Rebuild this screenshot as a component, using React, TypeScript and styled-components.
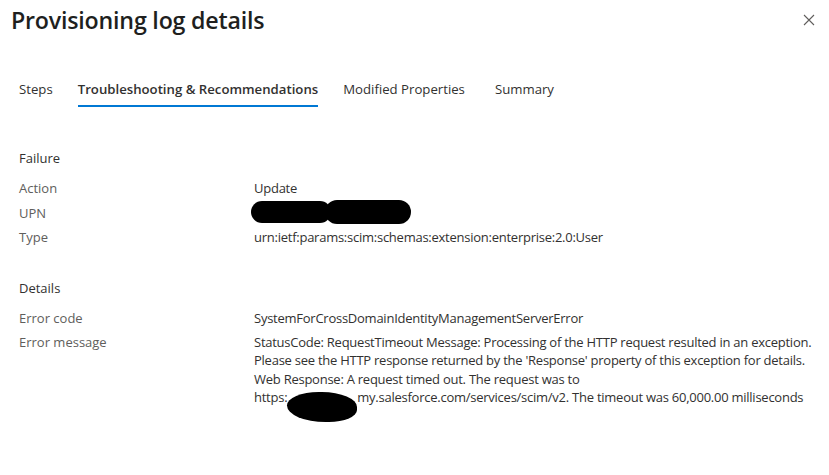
import styled, { createGlobalStyle } from 'styled-components';

const GlobalStyle = createGlobalStyle`
  html, body {
    margin: 0;
    padding: 0;
    background: #ffffff;
  }

  body {
    font-family: 'Open Sans', 'Noto Sans', sans-serif;
    color: #323130;
  }
`;

const tabs = ['Steps', 'Troubleshooting & Recommendations', 'Modified Properties', 'Summary'];

const failureRows = [
  { label: 'Action', value: 'Update' },
  { label: 'UPN', value: '', redacted: true },
  { label: 'Type', value: 'urn:ietf:params:scim:schemas:extension:enterprise:2.0:User' },
];

const CloseIcon = () => (
  <svg width='12' height='12' viewBox='0 0 12 12'>
    <path d='M1 1 L11 11 M11 1 L1 11' stroke='#605e5c' strokeWidth='1.1' fill='none' />
  </svg>
);

const Row = ({ label, children }: { label: string; children: React.ReactNode }) => (
  <StyledRow>
    <StyledLabel>{label}</StyledLabel>
    <StyledValue>{children}</StyledValue>
  </StyledRow>
);

function App() {
  return (
    <StyledPanel>
      <GlobalStyle />
      <StyledHeader>
        <StyledTitle>Provisioning log details</StyledTitle>
        <StyledClose>
          <CloseIcon />
        </StyledClose>
      </StyledHeader>

      <StyledTabs>
        {tabs.map((tab, index) => (
          <StyledTab key={tab} $active={index === 1}>
            {tab}
          </StyledTab>
        ))}
      </StyledTabs>

      <StyledSection>
        <StyledSectionTitle>Failure</StyledSectionTitle>
        {failureRows.map(row => (
          <Row key={row.label} label={row.label}>
            {row.redacted ? (
              <StyledRedactGroup>
                <StyledBlob $width={80} $height={22} />
                <StyledBlob $width={86} $height={24} $overlap />
              </StyledRedactGroup>
            ) : (
              row.value
            )}
          </Row>
        ))}
      </StyledSection>

      <StyledSection $gap>
        <StyledSectionTitle>Details</StyledSectionTitle>
        <Row label='Error code'>SystemForCrossDomainIdentityManagementServerError</Row>
        <Row label='Error message'>
          <StyledMessage>
            <div>StatusCode: RequestTimeout Message: Processing of the HTTP request resulted in an exception.</div>
            <div>Please see the HTTP response returned by the 'Response' property of this exception for details.</div>
            <div>Web Response: A request timed out. The request was to</div>
            <div>
              https:
              <StyledInlineBlob />
              my.salesforce.com/services/scim/v2. The timeout was 60,000.00 milliseconds
            </div>
          </StyledMessage>
        </Row>
      </StyledSection>
    </StyledPanel>
  );
}

export default App;

const StyledPanel = styled.div`
  width: 829px;
  height: 475px;
  box-sizing: border-box;
  overflow: hidden;
  font-size: 13px;
`;

const StyledHeader = styled.div`
  display: flex;
  justify-content: space-between;
  align-items: center;

  height: 40px;
  padding: 0 14px 0 11px;
`;

const StyledTitle = styled.h1`
  margin: 0;

  font-size: 23.2px;
  font-weight: 600;
  color: #201f1e;
  letter-spacing: -0.2px;
`;

const StyledClose = styled.div`
  display: flex;
  align-items: center;
`;

const StyledTabs = styled.div`
  display: flex;

  gap: 25px;

  margin-top: 32px;
  padding: 0 19px;
`;

const StyledTab = styled.div<{ $active?: boolean }>`
  height: 35px;
  box-sizing: border-box;
  padding-top: 8px;

  font-size: 13.2px;
  font-weight: ${({ $active }) => ($active ? 600 : 400)};
  color: #323130;
  border-bottom: 2px solid ${({ $active }) => ($active ? '#0078d4' : 'transparent')};

  &:last-child {
    margin-left: 5px;
  }
`;

const StyledSection = styled.div<{ $gap?: boolean }>`
  display: flex;
  flex-direction: column;

  margin-top: ${({ $gap }) => ($gap ? '26px' : '42px')};
  padding: 0 19px;
`;

const StyledSectionTitle = styled.div`
  height: 30px;

  font-size: 13px;
  font-weight: 500;
  color: #323130;
`;

const StyledRow = styled.div`
  display: flex;

  min-height: 24.5px;
`;

const StyledLabel = styled.div`
  width: 235px;
  flex-shrink: 0;

  color: #605e5c;
`;

const StyledValue = styled.div`
  color: #323130;
  white-space: nowrap;
  letter-spacing: -0.25px;
`;

const StyledMessage = styled.div`
  line-height: 18.3px;
`;

const StyledRedactGroup = styled.div`
  display: flex;
  align-items: center;

  margin-left: -3px;
  height: 24px;
  margin-top: -4px;
`;

const StyledBlob = styled.div<{ $width: number; $height: number; $overlap?: boolean }>`
  width: ${({ $width }) => $width}px;
  height: ${({ $height }) => $height}px;
  margin-left: ${({ $overlap }) => ($overlap ? '-6px' : '0')};

  background: #000000;
  border-radius: 12px;
`;

const StyledInlineBlob = styled.span`
  display: inline-block;
  position: relative;
  top: 8px;

  width: 70px;
  height: 30px;
  margin: -12px 0 -12px 0;

  background: #000000;
  border-radius: 45% 50% 40% 55%;
`;
